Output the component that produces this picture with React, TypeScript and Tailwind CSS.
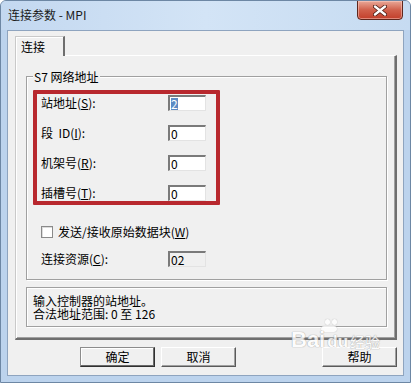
import React from "react";

const sunken =
  "border-t-2 border-l-2 border-b border-r border-t-[#7a7a7a] border-l-[#7a7a7a] border-b-[#e3e3e3] border-r-[#e3e3e3]";

function Field({ value, selected, disabled }: { value: string; selected?: boolean; disabled?: boolean }) {
  return (
    <div
      className={`w-[38px] h-[16px] ${sunken} ${disabled ? "bg-[#f0f0f0]" : "bg-white"} flex items-center pl-[1px] text-[12px] leading-[13px] text-black`}
    >
      {selected ? <span className="bg-[#5d8bc4] text-white px-[0px] leading-[12px]">{value}</span> : <span>{value}</span>}
    </div>
  );
}

function Row({ label, value, selected }: { label: React.ReactNode; value: string; selected?: boolean }) {
  return (
    <div className="h-[16px] flex items-center">
      <div className="w-[127px] text-[12px] leading-[16px] text-black whitespace-nowrap">{label}</div>
      <Field value={value} selected={selected} />
    </div>
  );
}

function Btn({ children, def, className = "" }: { children: React.ReactNode; def?: boolean; className?: string }) {
  return (
    <div
      className={`w-[75px] h-[20px] flex items-center justify-center text-[12px] leading-[16px] text-black bg-[#f0f0f0] ${
        def
          ? "border border-t-[#8c8c8c] border-l-[#8c8c8c] border-b-[#303030] border-r-[#303030] shadow-[inset_-1px_-1px_0_#696969,inset_1px_1px_0_#fff]"
          : "border border-t-[#fff] border-l-[#fff] border-b-[#5a5a5a] border-r-[#5a5a5a] shadow-[inset_-1px_-1px_0_#a0a0a0]"
      } ${className}`}
    >
      {children}
    </div>
  );
}

export default function App() {
  return (
    <div className="w-[411px] h-[383px] relative overflow-hidden font-['Noto_Sans_CJK_SC',sans-serif] bg-[#bcd3ed] border border-[#6d87a4] rounded-t-[6px] flex flex-col">
      {/* title bar */}
      <div className="h-[29px] flex items-start justify-between bg-gradient-to-r from-[#c3d8f0] via-[#d3e4f6] to-[#c6dbf1]">
        <div className="ml-[7px] mt-[6px] text-[12px] leading-[16px] text-[#1b1b1b]">连接参数 - MPI</div>
        <div className="mr-[7px] -mt-px w-[46px] h-[20px] rounded-b-[4px] border border-[#5e271d] bg-gradient-to-b from-[#e8a898] via-[#d0604b] to-[#c23e2a] flex items-center justify-center shadow-[inset_0_0_0_1px_rgba(255,210,200,0.5)]">
          <svg width="14" height="11" viewBox="0 0 14 11">
            <path d="M2 1.5 L12 9.5 M12 1.5 L2 9.5" stroke="#4a1a12" strokeWidth="4" strokeLinecap="round" />
            <path d="M2 1.5 L12 9.5 M12 1.5 L2 9.5" stroke="#ffffff" strokeWidth="2.4" strokeLinecap="round" />
          </svg>
        </div>
      </div>

      {/* client area */}
      <div className="flex-1 mx-[6px] mb-[6px] bg-[#f0f0f0] border border-[#8ea4bf] flex flex-col">
        {/* tab */}
        <div className="pt-[5px] pl-[7px] flex">
          <div className="relative z-10 -mb-px w-[50px] h-[20px] bg-[#f0f0f0] border-l border-t border-[#c9c9c9] border-r-2 border-r-[#6e6e6e] shadow-[inset_1px_1px_0_#fff] flex items-center pl-[5px] text-[12px] leading-[16px] text-black">
            连接
          </div>
        </div>
        {/* panel */}
        <div className="ml-[7px] w-[382px] h-[285px] bg-[#f0f0f0] border-t border-l border-t-[#fff] border-l-[#c9c9c9] border-r-2 border-b-2 border-r-[#6e6e6e] border-b-[#6e6e6e] shadow-[inset_1px_0_0_#fff,inset_-1px_-1px_0_#a0a0a0] pt-[20px] pl-[10px]">
          {/* group box */}
          <div className="relative w-[361px] border border-[#a0a0a0] shadow-[inset_1px_1px_0_#fff,1px_1px_0_#fff] pt-[13px] pl-[6px] pb-[12px]">
            <div className="absolute -top-[8px] left-[6px] px-[1px] bg-[#f0f0f0] text-[12px] leading-[16px] text-black">
              S7 网络地址
            </div>
            <div className="w-[187px] h-[115px] border-[4px] border-[#b8282e] rounded-[1px] pt-[1px] pl-[4px] flex flex-col gap-[14px]">
              <Row label={<>站地址(<u>S</u>):</>} value="2" selected />
              <Row label={<>段&nbsp;&nbsp;ID(<u>I</u>):</>} value="0" />
              <Row label={<>机架号(<u>R</u>):</>} value="0" />
              <Row label={<>插槽号(<u>T</u>):</>} value="0" />
            </div>
            <div className="mt-[21px] ml-[8px] h-[12px] flex items-center">
              <div className="w-[12px] h-[12px] bg-white border border-[#8a8a8a] shadow-[inset_1px_1px_0_#dcdcdc]" />
              <div className="ml-[5px] text-[12px] leading-[16px] text-black">
                发送/接收原始数据块(<u>W</u>)
              </div>
            </div>
            <div className="mt-[13px] ml-[8px] h-[16px] flex items-center">
              <div className="w-[127px] text-[12px] leading-[16px] text-black">
                连接资源(<u>C</u>):
              </div>
              <Field value="02" disabled />
            </div>
          </div>
          {/* description */}
          <div className="mt-[7px] w-[361px] h-[40px] border border-[#a0a0a0] shadow-[inset_1px_1px_0_#fff,1px_1px_0_#fff] pt-[6px] pl-[6px] text-[12px] leading-[13px] text-black">
            <div>输入控制器的站地址。</div>
            <div>合法地址范围: 0 至 126</div>
          </div>
        </div>
        {/* buttons */}
        <div className="mt-[7px] flex items-center">
          <Btn def className="ml-[72px]">确定</Btn>
          <Btn className="ml-[6px]">取消</Btn>
          <Btn className="ml-auto mr-[6px]">帮助</Btn>
        </div>
      </div>

      {/* watermark */}
      <div className="absolute left-[290px] top-[318px] pointer-events-none opacity-80">
        <div className="relative w-[90px] h-[34px]">
          <div className="absolute left-[34px] top-[0px] flex gap-[2px]">
            <div className="w-[5px] h-[6px] rounded-full bg-white [box-shadow:0_0_1px_#999]" />
            <div className="w-[5px] h-[6px] rounded-full bg-white [box-shadow:0_0_1px_#999]" />
          </div>
          <div className="absolute left-[30px] top-[7px] w-[16px] h-[6px] rounded-full bg-white [box-shadow:0_0_1px_#999]" />
          <div className="absolute left-[0px] top-[10px] flex items-end text-white font-bold [text-shadow:0_0_1px_#9a9a9a,0_0_1px_#9a9a9a]">
            <span className="text-[22px] leading-[22px] font-['Liberation_Sans',sans-serif]">Bai</span>
            <span className="ml-[2px] text-[17px] leading-[19px] font-['Liberation_Sans',sans-serif]">du</span>
            <span className="ml-[2px] text-[15px] leading-[19px] font-normal">经验</span>
          </div>
        </div>
      </div>
    </div>
  );
}
